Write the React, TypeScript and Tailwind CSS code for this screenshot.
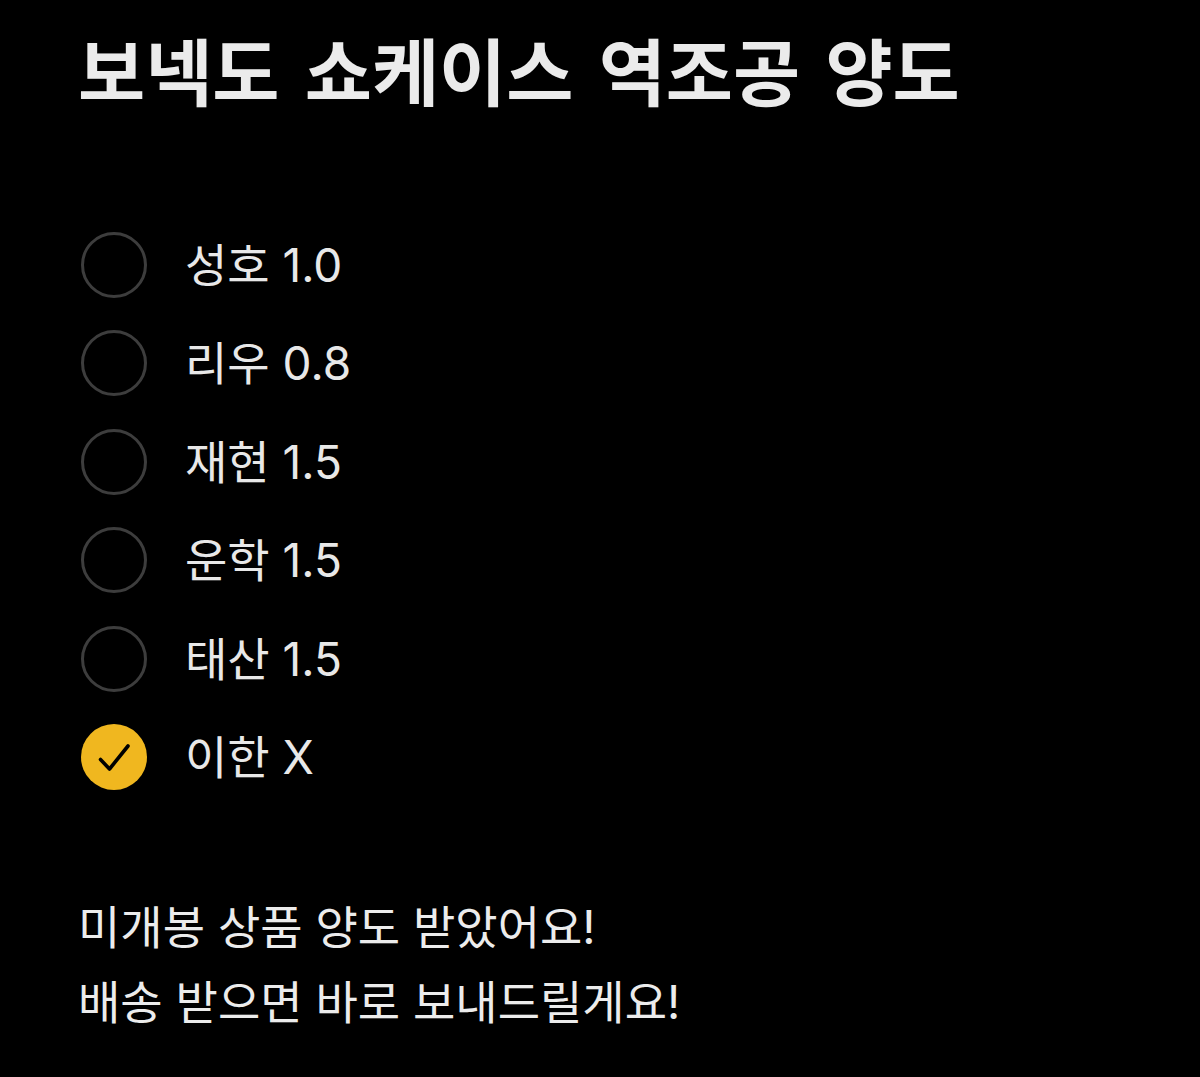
const options = [
  { name: '성호 1.0', checked: false },
  { name: '리우 0.8', checked: false },
  { name: '재현 1.5', checked: false },
  { name: '운학 1.5', checked: false },
  { name: '태산 1.5', checked: false },
  { name: '이한 X', checked: true },
]

export default function App() {
  return (
    <div
      className="min-h-[1077px] w-[1200px] bg-black pl-[78px] pt-[26px] text-[#e8e8e8]"
      style={{ fontFamily: 'Inter, "Noto Sans CJK KR", "Noto Sans", sans-serif' }}
    >
      <h1 className="text-[73px] font-bold leading-[96px] [word-spacing:8px] text-[#ebebeb]">
        보넥도 쇼케이스 역조공 양도
      </h1>

      {/* 선택지 */}
      <ul className="mt-[110px] flex flex-col gap-[32.4px] pl-[3px]">
        {options.map((o) => (
          <li key={o.name} className="flex h-[66px] items-center gap-[38px]">
            {o.checked ? (
              <span className="flex h-[66px] w-[66px] items-center justify-center rounded-full bg-[#f0b71f]">
                <svg width="36" height="36" viewBox="0 0 36 36" fill="none">
                  <path
                    d="M4.5 20.5 L13.5 30 L32 7"
                    stroke="black"
                    strokeWidth="3.6"
                    strokeLinecap="round"
                    strokeLinejoin="round"
                  />
                </svg>
              </span>
            ) : (
              <span className="h-[66px] w-[66px] rounded-full border-[3px] border-[#3d3d3d]" />
            )}
            <span className="text-[46px] leading-none">{o.name}</span>
          </li>
        ))}
      </ul>

      <p className="mt-[100px] text-[46px] leading-[75px] text-[#ececec]">
        미개봉 상품 양도 받았어요!
        <br />
        배송 받으면 바로 보내드릴게요!
      </p>
    </div>
  )
}
